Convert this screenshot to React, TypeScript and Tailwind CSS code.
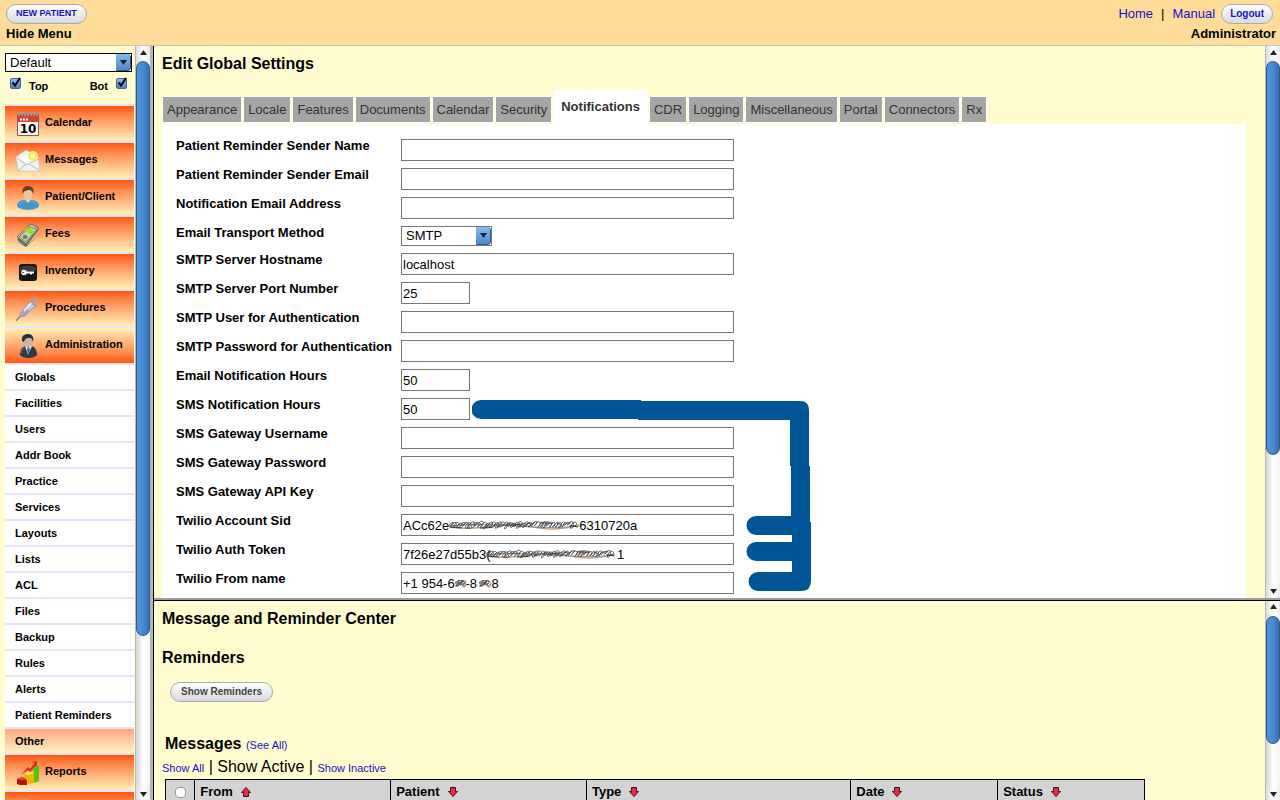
import { useState } from "react";
import type { ReactNode } from "react";

type IconName =
  | "calendar"
  | "mail"
  | "patient"
  | "money"
  | "key"
  | "syringe"
  | "admin"
  | "reports"
  | "misc";

const topMenu: { label: string; icon: IconName }[] = [
  { label: "Calendar", icon: "calendar" },
  { label: "Messages", icon: "mail" },
  { label: "Patient/Client", icon: "patient" },
  { label: "Fees", icon: "money" },
  { label: "Inventory", icon: "key" },
  { label: "Procedures", icon: "syringe" },
];

const adminMenu = [
  "Globals",
  "Facilities",
  "Users",
  "Addr Book",
  "Practice",
  "Services",
  "Layouts",
  "Lists",
  "ACL",
  "Files",
  "Backup",
  "Rules",
  "Alerts",
  "Patient Reminders",
];

const tabs = [
  "Appearance",
  "Locale",
  "Features",
  "Documents",
  "Calendar",
  "Security",
  "Notifications",
  "CDR",
  "Logging",
  "Miscellaneous",
  "Portal",
  "Connectors",
  "Rx",
];

type Field = {
  id: string;
  label: string;
  value?: string;
  small?: boolean;
  select?: boolean;
  // masked stretches of the value: [left, width]
  masks?: [number, number][];
};

const gap = (n: number) => "\u00a0".repeat(n);

const fields: Field[] = [
  { id: "sender_name", label: "Patient Reminder Sender Name" },
  { id: "sender_email", label: "Patient Reminder Sender Email" },
  { id: "notify_email", label: "Notification Email Address" },
  { id: "transport", label: "Email Transport Method", select: true },
  { id: "smtp_host", label: "SMTP Server Hostname", value: "localhost" },
  { id: "smtp_port", label: "SMTP Server Port Number", value: "25", small: true },
  { id: "smtp_user", label: "SMTP User for Authentication" },
  { id: "smtp_pass", label: "SMTP Password for Authentication" },
  { id: "email_hours", label: "Email Notification Hours", value: "50", small: true },
  { id: "sms_hours", label: "SMS Notification Hours", value: "50", small: true },
  { id: "sms_user", label: "SMS Gateway Username" },
  { id: "sms_pass", label: "SMS Gateway Password" },
  { id: "sms_key", label: "SMS Gateway API Key" },
  {
    id: "twilio_sid",
    label: "Twilio Account Sid",
    value: "ACc62e" + gap(36) + "6310720a",
    masks: [[47, 132]],
  },
  {
    id: "twilio_token",
    label: "Twilio Auth Token",
    value: "7f26e27d55b3(" + gap(35) + "1",
    masks: [[84, 131]],
  },
  {
    id: "twilio_from",
    label: "Twilio From name",
    value: "+1 954-6" + gap(3) + "-8" + gap(4) + "8",
    masks: [
      [53, 13],
      [77, 14],
    ],
  },
];

const columns = [
  { label: "From", width: "w-[20%]", up: true },
  { label: "Patient", width: "w-[20%]" },
  { label: "Type", width: "w-[27%]" },
  { label: "Date", width: "w-[15%]" },
  { label: "Status", width: "w-[15%]" },
];

function MenuIcon({ name }: { name: IconName }) {
  return (
    <svg viewBox="0 0 24 24" className="h-6 w-6 shrink-0" aria-hidden="true">
      {name === "calendar" && (
        <>
          <rect x="1" y="2" width="22" height="22" rx="1" fill="#8e5a50" />
          <rect x="2" y="3" width="20" height="7" fill="#d8402f" />
          <rect x="2" y="10" width="20" height="13" fill="#fafafa" />
          <path d="M3 0v4M6 0v4M9 0v4M12 0v4M15 0v4M18 0v4M21 0v4" stroke="#9a9aa2" strokeWidth="1.8" />
          <path d="M4 7.5h8" stroke="#fff" strokeWidth="2" strokeDasharray="2 1" />
          <text x="12" y="21" textAnchor="middle" fontFamily="DejaVu Sans" fontWeight="bold" fontSize="12" fill="#000">
            10
          </text>
        </>
      )}
      {name === "mail" && (
        <>
          <path d="M0 8 10 1 22 7 24 22 2 22Z" fill="#f3f3f3" stroke="#c4c4c4" strokeWidth=".8" />
          <path d="M3 9 11 4 20 8 12 16Z" fill="#fff" stroke="#d6d6d6" strokeWidth=".6" />
          <path d="M1 9 10 16 23 10M2 22 10 15M23 21 13 15" fill="none" stroke="#b5b5b5" strokeWidth=".9" />
          <circle cx="17" cy="7" r="5" fill="#fbf36a" />
          <circle cx="17" cy="7" r="3" fill="#fffdd0" stroke="#f5e230" />
        </>
      )}
      {name === "patient" && (
        <>
          <path d="M1 20c0-5 5-6 8-6h5c4 0 9 1 9 6-3 5-19 5-22 0Z" fill="#4596c8" />
          <path d="M4 19c1-3 3-4 6-4h4c4 0 5 2 6 4" fill="none" stroke="#68b0da" />
          <path d="m9 13 3 4 3-4Z" fill="#f4d2b2" />
          <ellipse cx="12" cy="7.5" rx="4.6" ry="6.2" fill="#f2c49c" />
          <path d="M7 8C5 2 9 0 12 0c4 0 7 3 5 8-1-3-2-4-4-4-3 1-5 0-6 4Z" fill="#65432c" />
        </>
      )}
      {name === "money" && (
        <>
          <path d="m1 17 14-15 8 4-13 18Z" fill="#58614d" />
          <path d="m1 14 14-13 8 4-13 16Z" fill="#c6cfb5" stroke="#48523d" strokeWidth=".8" />
          <path d="m3 14 11-10 7 2-11 13Z" fill="none" stroke="#788467" />
          <path d="m8 7 8 5 3-3-7-5Z" fill="#a4d820" />
          <ellipse cx="9" cy="14" rx="2.5" ry="2" fill="#707e63" />
          <path d="m2 17 8 5L22 8M2 19l8 5L23 11" fill="none" stroke="#899277" strokeWidth=".8" />
        </>
      )}
      {name === "key" && (
        <>
          <rect x="3" y="4" width="18" height="17" rx="3" fill="#151515" />
          <path d="M4 8c0-3 16-3 16 0v3H4Z" fill="#3c3c3c" />
          <circle cx="8" cy="12.5" r="2.8" fill="#fff" />
          <path d="M10 11.5h8v2h-2v1h-2v-1h-4Z" fill="#fff" />
          <circle cx="7" cy="12.5" r=".8" fill="#222" />
        </>
      )}
      {name === "syringe" && (
        <>
          <path d="m0 24 6-7" stroke="#777" strokeWidth="1.2" />
          <path d="M5 15 15 4l5 4L9 19l-5 1Z" fill="#c5cce4" stroke="#8088a5" strokeWidth=".8" />
          <path d="m6 15 4-4 4 3-5 5-4 1Z" fill="#a59dca" />
          <path d="m16 6 4-4M18 1l5 3M13 4l8 6" stroke="#9aa8bc" strokeWidth="2" />
          <path d="m8 14 7-8" stroke="#eff4ff" strokeWidth="1.6" />
        </>
      )}
      {name === "admin" && (
        <>
          <path d="M4 21c0-6 3-9 7-9h3c5 0 7 4 7 9-3 4-14 4-17 0Z" fill="#303944" />
          <path d="m9 12 3 9 4-9Z" fill="#e5e9ef" />
          <path d="m12 13-1 3 1 5 2-5-1-3Z" fill="#3471a8" />
          <ellipse cx="12" cy="7.5" rx="4.5" ry="6" fill="#c9b5a8" />
          <path d="M6 7C5 1 9 0 13 0c4 1 5 4 4 8-1-2-1-4-3-4-3 0-5 0-6 4Z" fill="#26313c" />
          <path d="M5 19c1-4 3-5 5-5" fill="none" stroke="#66717e" />
        </>
      )}
      {name === "reports" && (
        <>
          <path d="m1 18 5-2 5 2v6l-5 1-5-2Z" fill="#b80f0f" />
          <path d="m1 18 5-2 5 2-5 1Z" fill="#ee4538" />
          <path d="m8 13 4-3 6 2v10l-6 1-2-5-2-1Z" fill="#f5b400" />
          <path d="m8 13 4-3 6 2-5 2Z" fill="#ffe45a" />
          <path d="m16 6 5-2 2 2v14l-5 2V10l-2-1Z" fill="#55c60f" />
          <path d="m5 14 7-8 2 2 5-6-3-1 5-1v6l-1-2-6 7-2-2Z" fill="#e92222" />
        </>
      )}
      {name === "misc" && (
        <>
          <circle cx="8" cy="6" r="5" fill="#f6ead8" stroke="#b28560" />
          <circle cx="16" cy="7" r="5" fill="#fff6e8" stroke="#a97b57" />
        </>
      )}
    </svg>
  );
}

function Scrollbar({ size }: { size: number }) {
  return (
    <div
      className="flex w-[15px] shrink-0 flex-col border-l border-[#b8b8b8] bg-linear-to-r from-[#dcdcdc] via-white to-[#ececec]"
      aria-hidden="true"
    >
      <div className="flex h-3 items-center justify-center">
        <svg viewBox="0 0 7 5" className="h-[5px] w-[7px]">
          <path d="M3.5 0 7 5H0Z" fill="#222" />
        </svg>
      </div>
      <div className="flex flex-1 flex-col rounded-full bg-linear-to-r from-[#d2d2d2] via-white to-[#f4f4f4] pt-[3px]">
        <div
          className="rounded-full border border-[#35597f] bg-linear-to-r from-[#4f92d6] via-[#4a8ad2] to-[#3270b8]"
          style={{ flexGrow: size }}
        />
        <div style={{ flexGrow: 100 - size }} />
      </div>
      <div className="flex h-3 items-center justify-center">
        <svg viewBox="0 0 7 5" className="h-[5px] w-[7px]">
          <path d="M0 0H7L3.5 5Z" fill="#222" />
        </svg>
      </div>
    </div>
  );
}

function PillButton({ children, className }: { children: ReactNode; className: string }) {
  return (
    <button
      type="button"
      className={
        "h-5 rounded-full border border-[#a9a9b4] bg-linear-to-b from-white to-[#d9d9df] font-bold " + className
      }
    >
      {children}
    </button>
  );
}

function SelectArrow() {
  return (
    <span className="pointer-events-none absolute inset-y-px right-px flex w-[15px] items-center justify-center rounded-r-sm border-r border-b border-[#2f5d8d] bg-linear-to-b from-[#8abcec] to-[#4a88cc]">
      <svg viewBox="0 0 7 5" className="h-[5px] w-[7px]" aria-hidden="true">
        <path d="M0 0H7L3.5 5Z" fill="#0d2238" />
      </svg>
    </span>
  );
}

function BlueCheck({ id }: { id: string }) {
  const [on, setOn] = useState(true);
  return (
    <span className="relative h-[11px] w-[11px]">
      <input
        id={id}
        type="checkbox"
        checked={on}
        onChange={() => setOn(!on)}
        className="block h-[11px] w-[11px] appearance-none rounded-xs border border-[#3e6798] bg-linear-to-b from-[#8fbdea] to-[#4785cb]"
      />
      {on && (
        <svg viewBox="0 0 12 12" className="pointer-events-none absolute -top-px left-0 h-3 w-3" aria-hidden="true">
          <path d="M2.5 5.5 5 8.5 10 1" fill="none" stroke="#000" strokeWidth="2" />
        </svg>
      )}
    </span>
  );
}

// rough pen loops that hide part of a value
function Scribble({ left, width }: { left: number; width: number }) {
  let loops = "M1 6";
  let seed = 7;
  const next = (n: number) => {
    seed = (seed * 73 + 41) % 1009;
    return seed % n;
  };
  for (let x = 1; x < width - 5; x += 3) {
    const y = 4 + next(4);
    loops += `C${x + next(4)} ${1 + next(3)} ${x + 6} ${2 + next(3)} ${x + 4} ${y}S${x} ${8 + next(3)} ${x + 3} ${5 + next(3)}`;
  }
  return (
    <svg
      className="pointer-events-none absolute top-[5px] h-3"
      style={{ left, width }}
      viewBox={`0 0 ${width} 12`}
      aria-hidden="true"
    >
      <path
        d={`M1 8Q${width / 6} 11 ${width / 3} 7T${width * 0.65} 8T${width - 1} 6`}
        fill="none"
        stroke="#c9a27c"
        strokeWidth="1.5"
      />
      <path d={`M1 7Q${width / 5} 4 ${width / 2} 7T${width - 1} 7`} fill="none" stroke="#7f97b8" />
      <path d={loops} fill="none" stroke="#3a3a3a" strokeWidth=".8" />
      <path
        d={`M2 8Q${width / 4} 11 ${width / 2} 6T${width - 2} 8`}
        fill="none"
        stroke="#333"
        strokeDasharray="12 5 4 9"
      />
    </svg>
  );
}

function SortArrow({ up }: { up?: boolean }) {
  return (
    <svg viewBox="0 0 10 10" className="h-[10px] w-[10px]" aria-hidden="true">
      <path
        d={up ? "M5 .5 9.5 5.5H7.5V9.5H2.5V5.5H.5Z" : "M2.5 .5H7.5V4.5H9.5L5 9.5 .5 4.5H2.5Z"}
        fill="#f5254a"
        stroke="#3a1018"
      />
    </svg>
  );
}

function Sidebar() {
  const itemClass =
    "flex h-[37px] w-full items-center gap-[5px] border-b-2 border-[#e6e3fa] pl-[11px] text-left text-[11px] font-bold";
  return (
    <nav className="flex w-[150px] shrink-0 bg-[#fffdd0]">
      <div className="min-w-0 flex-1 overflow-hidden pt-[7px] pr-px pl-[5px]">
        <div className="relative mr-0.5">
          <select
            aria-label="Layout"
            className="block h-[19px] w-full appearance-none border border-black bg-white pl-1 text-[13px] leading-[17px]"
          >
            <option>Default</option>
          </select>
          <SelectArrow />
        </div>
        <div className="flex h-8 items-start justify-between px-[5px] pt-1.5 text-[11px] leading-4 font-bold">
          <span className="flex gap-2">
            <BlueCheck id="top" />
            <label htmlFor="top">Top</label>
          </span>
          <span className="flex gap-2 pr-0.5">
            <label htmlFor="bot">Bot</label>
            <BlueCheck id="bot" />
          </span>
        </div>
        <ul className="border-t-2 border-[#e6e3fa]">
          {topMenu.map((m) => (
            <li key={m.label}>
              <button type="button" className={itemClass + " bg-linear-to-b from-[#ff5500] to-[#fff0b8]"}>
                <MenuIcon name={m.icon} />
                <span className="pb-0.5">{m.label}</span>
              </button>
            </li>
          ))}
          <li>
            <button type="button" className={itemClass + " bg-linear-to-b from-[#fff0b8] to-[#ff5500]"}>
              <MenuIcon name="admin" />
              <span className="pb-0.5">Administration</span>
            </button>
            <ul>
              {adminMenu.map((m) => (
                <li key={m}>
                  <a
                    href="#"
                    className="block h-[26px] border-b-2 border-[#e6e3fa] bg-white pl-2.5 text-[11px] leading-6 font-bold"
                  >
                    {m}
                  </a>
                </li>
              ))}
              <li>
                <a
                  href="#"
                  className="block h-[26px] border-b-2 border-[#e6e3fa] bg-linear-to-b from-[#ffa781] to-[#fff0c4] pl-2.5 text-[11px] leading-6 font-bold"
                >
                  Other
                </a>
              </li>
            </ul>
          </li>
          <li>
            <button type="button" className={itemClass + " bg-linear-to-b from-[#ff5500] to-[#fff0b8]"}>
              <MenuIcon name="reports" />
              <span className="pb-0.5">Reports</span>
            </button>
          </li>
          <li>
            <button
              type="button"
              aria-label="Miscellaneous"
              className={itemClass + " bg-linear-to-b from-[#ff5500] to-[#fff0b8]"}
            >
              <MenuIcon name="misc" />
            </button>
          </li>
        </ul>
      </div>
      <Scrollbar size={79} />
    </nav>
  );
}

function FieldRow({ field }: { field: Field }) {
  const [value, setValue] = useState(field.value ?? "");
  return (
    <div className="flex items-start">
      <label htmlFor={field.id} className="w-[225px] shrink-0 text-[13px] leading-[14px] font-bold whitespace-nowrap">
        {field.label}
      </label>
      <div className="relative">
        {field.select ? (
          <>
            <select
              id={field.id}
              className="block h-5 w-[91px] appearance-none border border-[#777] bg-white pl-1 text-[13px] leading-[18px]"
            >
              <option>SMTP</option>
            </select>
            <SelectArrow />
          </>
        ) : (
          <input
            id={field.id}
            type="text"
            value={value}
            onChange={(e) => setValue(e.target.value)}
            className={
              "block h-[22px] border border-[#777] bg-white px-px text-[13px] " + (field.small ? "w-[69px]" : "w-[333px]")
            }
          />
        )}
        {field.masks?.map(([left, width]) => (
          <Scribble key={left} left={left} width={width} />
        ))}
      </div>
    </div>
  );
}

function GlobalSettings() {
  const [active, setActive] = useState("Notifications");
  return (
    <section className="flex min-h-0 flex-[554] border-b-2 border-[#9b9b9b]">
      <div className="min-w-0 flex-1 overflow-hidden pt-2 pr-[19px] pl-2">
        <h1 className="text-[16px] leading-5 font-bold">Edit Global Settings</h1>
        <div className="mt-4 flex h-[34px] items-end gap-px text-[13px]">
          {tabs.map((t) => (
            <button
              key={t}
              type="button"
              onClick={() => setActive(t)}
              className={
                t === active
                  ? "h-[34px] bg-white px-2 font-bold text-[#333]"
                  : "mb-px h-[27px] border border-[#fffef0] bg-[#a5a5a5] px-1 text-[#333]"
              }
            >
              {t}
            </button>
          ))}
        </div>
        <div className="relative h-full bg-white pt-[15px] pl-3.5">
          <form className="flex flex-col gap-[7px]">
            {fields.map((f) => (
              <FieldRow key={f.id} field={f} />
            ))}
          </form>
          {/* marker strokes tying the SMS hours to the Twilio fields */}
          <svg
            viewBox="0 0 340 192"
            className="pointer-events-none absolute top-[276px] left-[310px] h-[192px] w-[340px]"
            fill="#005596"
            aria-hidden="true"
          >
            <path d="M9 0H169V1H328Q337 1 337 10V66H338V122H339V181Q339 191 329 191H286A9.5 9.5 0 0 1 286 172H320V161H284A9.5 9.5 0 0 1 284 142H320V135H284A9.5 9.5 0 0 1 284 116H319V66H318V20H166V19H9A9.5 9.5 0 0 1 9 0Z" />
          </svg>
        </div>
      </div>
      <Scrollbar size={75} />
    </section>
  );
}

function MessageCenter() {
  return (
    <section className="flex min-h-0 flex-[200] border-t border-black">
      <div className="min-w-0 flex-1 overflow-hidden px-2 pt-2">
        <h2 className="text-[16px] leading-5 font-bold">Message and Reminder Center</h2>
        <h3 className="mt-[19px] text-[16px] leading-5 font-bold">Reminders</h3>
        <PillButton className="mt-3.5 ml-2 block px-2.5 text-[10px] text-[#444]">Show Reminders</PillButton>
        <h3 className="mt-8 pl-[3px] text-[16px] leading-5 font-bold">
          Messages{" "}
          <a href="#" className="text-[11px] font-normal text-[#1a0fc8]">
            (See All)
          </a>
        </h3>
        <p className="mt-0.5 text-[16px] leading-5">
          <a href="#" className="text-[11px] text-[#1a0fc8]">
            Show All
          </a>{" "}
          | Show Active |{" "}
          <a href="#" className="text-[11px] text-[#1a0fc8]">
            Show Inactive
          </a>
        </p>
        <table className="mt-px ml-[3px] w-[89.5%] table-fixed border-collapse text-[13px] leading-4">
          <thead>
            <tr className="h-[26px] bg-[#d3d3d3]">
              <th className="w-[3%] border border-black text-center">
                <input
                  type="checkbox"
                  aria-label="Select all messages"
                  className="mx-auto block h-[11px] w-[11px] appearance-none rounded-sm border border-[#999] bg-white"
                />
              </th>
              {columns.map((c) => (
                <th key={c.label} className={"border border-black px-[5px] text-left " + c.width}>
                  <span className="flex items-center gap-2">
                    {c.label}
                    <SortArrow up={c.up} />
                  </span>
                </th>
              ))}
            </tr>
          </thead>
        </table>
      </div>
      <Scrollbar size={74} />
    </section>
  );
}

function App() {
  return (
    <div className="flex h-screen flex-col overflow-hidden bg-[#fffdd0] font-['Liberation_Sans',Arial,sans-serif] text-black">
      <header className="flex h-[46px] shrink-0 justify-between border-b border-[#c9c3bb] bg-[#ffdd99] pt-1 pr-1 pl-1.5">
        <div>
          <PillButton className="block px-[9px] text-[9px] text-[#1a0fc8]">NEW PATIENT</PillButton>
          <a href="#" className="block text-[13px] leading-5 font-bold">
            Hide Menu
          </a>
        </div>
        <div className="text-right text-[13px]">
          <div className="flex h-5 items-center justify-end gap-2 pr-[3px] leading-[18px]">
            <a href="#" className="text-[#1a0fc8]">
              Home
            </a>
            <span>|</span>
            <a href="#" className="text-[#1a0fc8]">
              Manual
            </a>
            <PillButton className="-ml-0.5 px-2 text-[10px] text-[#1a0fc8]">Logout</PillButton>
          </div>
          <span className="block leading-5 font-bold">Administrator</span>
        </div>
      </header>
      <div className="flex min-h-0 flex-1">
        <Sidebar />
        <main className="ml-[3px] flex min-w-0 flex-1 flex-col border-l border-black shadow-[-3px_0_0_#b4b4b4]">
          <GlobalSettings />
          <MessageCenter />
        </main>
      </div>
    </div>
  );
}

export default App;
